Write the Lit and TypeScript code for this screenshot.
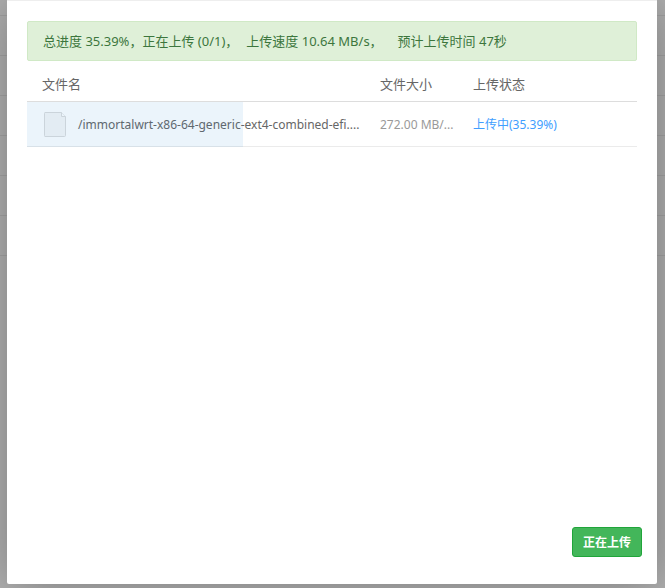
import { LitElement, html, css } from "lit";
import { customElement, property, state } from "lit/decorators.js";
import { styleMap } from "lit/directives/style-map.js";

interface UploadItem {
  name: string;
  size: string;
  percent: number;
}

@customElement("file-icon")
class FileIcon extends LitElement {
  static styles = css`
    :host {
      display: block;
      flex: none;
      width: 24px;
      height: 27px;
    }
    svg {
      display: block;
    }
  `;

  render() {
    return html`
      <svg width="24" height="27" viewBox="0 0 24 27" aria-hidden="true">
        <path d="M3 1.5H19.5L23.5 5.5V24.5Q23.5 25.5 22.5 25.5H3Q2.5 25.5 2.5 24.5V2.5Q2.5 1.5 3 1.5Z" fill="#f7f7f7" stroke="#dcdcdc" />
        <path d="M19.5 1.5V5.5H23.5" fill="#ffffff" stroke="#dcdcdc" />
      </svg>
    `;
  }
}

@customElement("upload-table")
class UploadTable extends LitElement {
  @property({ attribute: false }) items: UploadItem[] = [];

  static styles = css`
    :host {
      display: block;
    }
    .table {
      width: 100%;
      table-layout: fixed;
      border-collapse: separate;
      border-spacing: 0;
      color: #666;
      font-size: 13px;
    }
    .size-col {
      width: 93px;
    }
    .status-col {
      width: 179px;
    }
    th,
    td {
      box-sizing: border-box;
      padding: 0 0 0 15px;
      text-align: left;
      font-weight: 400;
      white-space: nowrap;
    }
    th {
      height: 36px;
      border-bottom: 1px solid #ddd;
    }
    td {
      height: 45px;
      border-bottom: 1px solid #ebebeb;
      font-size: 12px;
    }
    .row {
      position: relative;
    }
    .file {
      display: flex;
      align-items: center;
      gap: 12px;
    }
    .name,
    .size,
    .status {
      padding-top: 2px;
    }
    .size {
      color: #999;
    }
    .status {
      color: #409eff;
    }
    .progress {
      position: absolute;
      top: 0;
      bottom: 0;
      left: 0;
      background: rgba(32, 132, 209, 0.09);
    }
  `;

  render() {
    return html`
      <table class="table">
        <colgroup>
          <col />
          <col class="size-col" />
          <col class="status-col" />
        </colgroup>
        <thead>
          <tr>
            <th scope="col">文件名</th>
            <th scope="col">文件大小</th>
            <th scope="col">上传状态</th>
          </tr>
        </thead>
        <tbody>
          ${this.items.map(
            (item) => html`
              <tr class="row">
                <td>
                  <div class="file">
                    <file-icon></file-icon>
                    <span class="name">${item.name}</span>
                  </div>
                  <div class="progress" style=${styleMap({ width: `${item.percent}%` })}></div>
                </td>
                <td class="size">${item.size}</td>
                <td class="status">上传中(${item.percent}%)</td>
              </tr>
            `
          )}
        </tbody>
      </table>
    `;
  }
}

@customElement("app-root")
class AppRoot extends LitElement {
  @state() private items: UploadItem[] = [
    { name: "/immortalwrt-x86-64-generic-ext4-combined-efi....", size: "272.00 MB/...", percent: 35.39 },
  ];

  static styles = css`
    :host {
      display: flex;
      box-sizing: border-box;
      min-height: 100vh;
      padding: 0 8px 4px 7px;
      /* dimmed list rows of the page behind the dialog */
      background: linear-gradient(transparent 256px, #b0b0b0 256px),
        repeating-linear-gradient(#b0b0b0 0 15px, #a3a3a3 15px 16px, #b0b0b0 16px 40px);
      font-family: "Noto Sans", "Noto Sans CJK SC", sans-serif;
      font-size: 13px;
      line-height: 18px;
    }
    .dialog {
      display: flex;
      flex: 1;
      flex-direction: column;
      min-width: 0;
      box-sizing: border-box;
      border-top: 1px solid #eee;
      border-radius: 0 0 2px 2px;
      background: #fff;
      box-shadow: 1px 1px 50px rgba(0, 0, 0, 0.3);
    }
    .content {
      flex: 1;
      padding: 20px 20px 0;
    }
    .summary {
      display: flex;
      margin-bottom: 5px;
      padding: 10px 15px;
      border: 1px solid #d0e9c6;
      border-radius: 2px;
      background: #dff0d8;
      color: #3c763d;
      white-space: nowrap;
    }
    .speed {
      margin: 0 15px 0 8px;
    }
    .footer {
      display: flex;
      justify-content: flex-end;
      padding: 0 15px 27px;
    }
    .submit {
      height: 30px;
      padding: 2px 10px 0;
      border: 1px solid #20a53a;
      border-radius: 3px;
      background: #43b65a;
      color: #fff;
      font-family: inherit;
      font-size: 12px;
      font-weight: 700;
      line-height: 18px;
    }
  `;

  render() {
    return html`
      <section class="dialog" role="dialog" aria-label="文件上传">
        <div class="content">
          <div class="summary" role="status">
            <span>总进度 35.39%，正在上传 (0/1)，</span>
            <span class="speed">上传速度 10.64 MB/s，</span>
            <span>预计上传时间 47秒</span>
          </div>
          <upload-table .items=${this.items}></upload-table>
        </div>
        <footer class="footer">
          <button class="submit" type="button">正在上传</button>
        </footer>
      </section>
    `;
  }
}
